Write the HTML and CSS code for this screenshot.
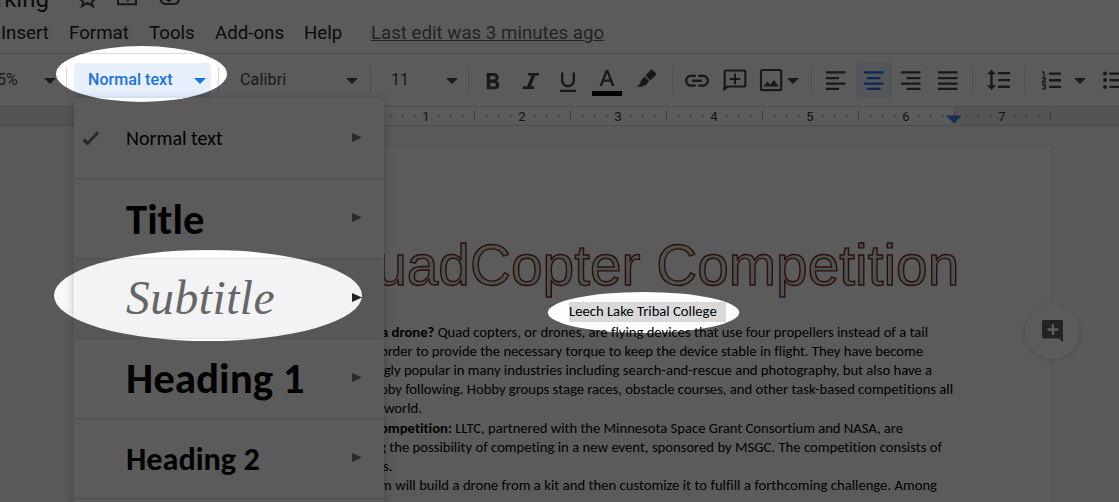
FILE: index.html
```
<!DOCTYPE html>
<html lang="en">
<head>
<meta charset="utf-8">
<title>Docs editor</title>
<link rel="stylesheet" href="styles.css">
</head>
<body>
<div class="app">
  <header class="titlebar">
    <span class="doc-name">rking</span>
    <svg class="title-icons" width="110" height="10" viewBox="0 0 110 10"><g fill="none" stroke="#444" stroke-width="2"><path d="M9.500-8L12-2l6 .5-4.500 3.500 1.500 4.300L9.500 3 4 6.300 5.500 2 1-1.500"/><path d="M40-6V4.300h18V-6M44-2h8M52-2l-3 3"/><path d="M82-5c0 5 1 9 6 9h8c5 0 5-4 5-9M88-1l3 2 5-4"/></g></svg>
  </header>
  <nav class="menubar">
    <span class="m-insert">Insert</span><span class="m-format">Format</span><span class="m-tools">Tools</span><span class="m-addons">Add-ons</span><span class="m-help">Help</span><span class="last-edit">Last edit was 3 minutes ago</span>
  </nav>
  <div class="toolbar">
    <div class="zoom-cell"><span>5%</span><i class="caret"></i></div>
    <i class="sep"></i>
    <div class="style-button"><span>Normal text</span><i class="caret blue"></i></div>
    <i class="sep"></i>
    <div class="font-cell"><span>Calibri</span><i class="caret"></i></div>
    <i class="sep"></i>
    <div class="size-cell"><span>11</span><i class="caret"></i></div>
    <i class="sep"></i>
    <svg class="ico g6" viewBox="0 0 36 36"><path transform="translate(3.500 6.300) scale(1.17)" d="M15.600 10.790c.97-.67 1.650-1.770 1.650-2.790 0-2.260-1.750-4-4-4H7v14h7.040c2.090 0 3.710-1.700 3.710-3.790 0-1.520-.86-2.820-2.150-3.420zM10 6.500h3c.83 0 1.500.67 1.500 1.500s-.67 1.500-1.500 1.500h-3v-3zm3.500 9H10v-3h3.500c.83 0 1.500.67 1.500 1.500s-.67 1.500-1.500 1.500z"/></svg>
    <svg class="ico g2" viewBox="0 0 36 36"><path d="M15 11h11v2.600h-3.700l-4.500 10.600H21V27H9.700v-2.800h4.400l4.500-10.600H15z"/></svg>
    <svg class="ico g1" viewBox="0 0 36 36"><path d="M12.200 10.500V18.500a5.800 5.800 0 0 0 11.600 0V10.500" fill="none" stroke="#444746" stroke-width="2.400"/><path d="M10 27.700h16v2.200H10z"/></svg>
    <svg class="ico g3" viewBox="0 0 36 36"><path fill-rule="evenodd" d="M16.700 8h2.600l6.200 16h-2.600l-1.600-4.200h-6.600L13.100 24h-2.600zM18 11l-2.500 6.600h5z"/><path fill="#000" d="M3 29h30v5H3z"/></svg>
    <svg class="ico g4" viewBox="0 0 36 36"><path d="M16.500 13.500l5-5.500a1.500 1.500 0 0 1 2.200 0l3 3a1.500 1.500 0 0 1 0 2.200l-5.500 5.300zM15.500 14.500l4.800 4.800-4 4.200-1.500-.2-1.500 1.500H8l3.700-3.800-.2-1.700z"/></svg>
    <i class="sep g7"></i>
    <svg class="ico g6" viewBox="0 0 36 36"><path transform="translate(3.600 4.400) scale(1.2)" d="M3.900 12c0-1.710 1.390-3.100 3.100-3.100h4V7H7c-2.760 0-5 2.240-5 5s2.240 5 5 5h4v-1.900H7c-1.710 0-3.100-1.390-3.100-3.100zM8 13h8v-2H8v2zm9-6h-4v1.900h4c1.710 0 3.100 1.390 3.100 3.100s-1.390 3.100-3.100 3.100h-4V17h4c2.760 0 5-2.240 5-5s-2.240-5-5-5z"/></svg>
    <svg class="ico g2" viewBox="0 0 36 36"><path d="M7.700 26.500V9.500q0-1 1-1h18.600q1 0 1 1v14q0 1-1 1H10.500z" fill="none" stroke="#444746" stroke-width="2.200"/><path d="M6.600 29.500v-5l5-.5zM17 11.500h2V16h4.300v2H19v4.300h-2V18h-4.300v-2H17z"/></svg>
    <svg class="ico" viewBox="0 0 36 36"><rect x="8" y="8" width="20.200" height="20.200" rx="1.500" fill="none" stroke="#444746" stroke-width="2.200"/><path d="M10.500 24.500l4-5 2.800 3.200 3.600-4.800 5 6.600z"/></svg>
    <i class="caret near"></i>
    <i class="sep g12"></i>
    <svg class="ico g6" viewBox="0 0 36 36"><path d="M8 9.200h19.500v2.300H8zM8 14.900h13v2.300H8zM8 20.500h19.500v2.300H8zM8 25.700h13V28H8z"/></svg>
    <svg class="ico g2 active" viewBox="0 0 36 36"><path d="M8 9.200h19.500v2.300H8zM11 14.900h13.500v2.300H11zM8 20.500h19.500v2.300H8zM11 25.700h13.500V28H11z"/></svg>
    <svg class="ico g1" viewBox="0 0 36 36"><path d="M8 9.200h19.500v2.300H8zM13.500 14.900h14v2.300h-14zM8 20.500h19.500v2.300H8zM13.500 25.700h14V28h-14z"/></svg>
    <svg class="ico g1" viewBox="0 0 36 36"><path d="M8 9.200h19.500v2.300H8zM8 14.900h19.500v2.300H8zM8 20.500h19.500v2.300H8zM8 25.700h19.500V28H8z"/></svg>
    <i class="sep g6"></i>
    <svg class="ico g7" viewBox="0 0 36 36"><path d="M11.500 7.500l4.500 4.700h-3.300v11.100H16L11.500 28 7 23.300h3.300V12.200H7zM18 10h12v2.300H18zM18 16.900h12v2.300H18zM18 23.600h12v2.300H18z"/></svg>
    <i class="sep g8"></i>
    <svg class="ico g7" viewBox="0 0 36 36"><path d="M17 10.500h12v2.300H17zM17 17.100h12v2.300H17zM17 23.800h12v2.300H17z"/><path d="M10 10h1.900v4.500M10 16h3.300v1L10.500 20h3.300M10 22.500h3.300v4.300H10M11.200 24.600h2" fill="none" stroke="#444746" stroke-width="1.300"/></svg>
    <i class="caret g6"></i>
    <svg class="ico g8" viewBox="0 0 36 36"><circle cx="11" cy="11.500" r="2"/><circle cx="11" cy="18" r="2"/><circle cx="11" cy="25" r="2"/><path d="M15.500 10.400H30v2.300H15.500zM15.500 17.100H30v2.300H15.500zM15.500 23.800H30v2.300H15.500z"/></svg>
  </div>
  <svg class="ruler" width="1119" height="19" viewBox="0 0 1119 19">
    <defs>
      <pattern id="minor" x="390" y="0" width="12" height="20" patternUnits="userSpaceOnUse"><path d="M0 7h1v4H0z" fill="#a4a7ab"/></pattern>
      <pattern id="major" x="378" y="0" width="96" height="20" patternUnits="userSpaceOnUse"><path d="M0 4h1v9H0z" fill="#a4a7ab"/></pattern>
    </defs>
    <path class="ruler-margin" d="M0 0h300v18H0zM954 0h165v18H954z"/>
    <path d="M384 0h667v19H384z" fill="url(#minor)"/>
    <path d="M384 0h667v19H384z" fill="url(#major)"/>
    <path d="M418 2h16v14h-16zM514 2h16v14h-16zM610 2h16v14h-16zM706 2h16v14h-16zM802 2h16v14h-16zM898 2h16v14h-16z" fill="#fff"/><path d="M994 2h16v14h-16z" fill="#e8eaed"/>
    <g class="ruler-num"><text x="426" y="14">1</text><text x="522" y="14">2</text><text x="618" y="14">3</text><text x="714" y="14">4</text><text x="810" y="14">5</text><text x="906" y="14">6</text><text x="1002" y="14">7</text></g>
    <path d="M946 8.500h16l-8 8z" fill="#4285f4"/>
    <path d="M0 18h1119v1H0z" fill="#d4d6d9"/>
  </svg>
  <main class="canvas">
    <article class="page">
      <svg class="wordart" width="700" height="80" viewBox="300 225 700 80"><text x="331" y="286">QuadCopter Competition</text></svg>
      <p class="subtitle"><span>Leech Lake Tribal College</span></p>
      <div class="body">
        <p class="l1"><b>a drone?</b> Quad copters, or drones, are flying devices that use four propellers instead of a tail</p>
        <p class="l2">order to provide the necessary torque to keep the device stable in flight. They have become</p>
        <p class="l3">ngly popular in many industries including search-and-rescue and photography, but also have a</p>
        <p class="l4">bby following. Hobby groups stage races, obstacle courses, and other task-based competitions all</p>
        <p class="l5">world.</p>
        <p class="l6"><b>ompetition:</b> LLTC, partnered with the Minnesota Space Grant Consortium and NASA, are</p>
        <p class="l7">g the possibility of competing in a new event, sponsored by MSGC. The competition consists of</p>
        <p class="l8">s.</p>
        <p class="l9">m will build a drone from a kit and then customize it to fulfill a forthcoming challenge. Among</p>
      </div>
    </article>
  </main>
</div>

<div class="add-comment"><svg width="22" height="23" viewBox="0 0 22 23"><path fill-rule="evenodd" d="M2 0h17.500q1.500 0 1.500 1.500V22l-4-3.500H2q-2 0-2-2V2q0-2 2-2zM9.700 4v4.300H5.500v2.400h4.200V15h2.400v-4.300h4.200V8.300h-4.200V4z"/></svg></div>

<div class="dropdown">
  <div class="item"><svg class="check" width="18" height="15" viewBox="0 0 18 15"><path d="M1.500 8.500l4 4L16 1.500" fill="none" stroke="#777" stroke-width="3.200"/></svg><span class="t-normal">Normal text</span><i class="arrow"></i></div>
  <div class="item"><span class="t-title">Title</span><i class="arrow"></i></div>
  <div class="item hover"><span class="t-sub">Subtitle</span><i class="arrow"></i></div>
  <div class="item"><span class="t-h1">Heading 1</span><i class="arrow"></i></div>
  <div class="item"><span class="t-h2">Heading 2</span><i class="arrow"></i></div>
</div>

<svg class="spotlight" width="1119" height="502" viewBox="0 0 1119 502">
  <defs><mask id="holes"><rect width="1119" height="502" fill="#fff"/><ellipse cx="141.500" cy="74" rx="85.500" ry="28"/><ellipse cx="208" cy="295.500" rx="154" ry="45.500"/><ellipse cx="643.500" cy="312.500" rx="95.700" ry="20.500"/></mask></defs>
  <rect width="1119" height="502" fill-opacity=".643" mask="url(#holes)"/>
</svg>
</body>
</html>
```

FILE: styles.css
```
* { box-sizing: border-box; }
body { margin: 0; width: 1119px; height: 502px; overflow: hidden; position: relative; background: #fff; font-family: Roboto, sans-serif; }
p { margin: 0; }
.app { width: 1119px; height: 502px; display: flex; flex-direction: column; overflow: hidden; }

.titlebar { height: 13px; flex: none; display: flex; align-items: flex-end; overflow: hidden; }
.doc-name { width: 82px; margin-left: -4px; font-size: 24px; line-height: 28px; color: #202124; height: 28px; }
.title-icons { align-self: flex-start; }

.menubar { height: 41px; flex: none; display: flex; align-items: center; border-bottom: 1px solid #dadce0; font-size: 18.7px; line-height: 40px; color: #202124; white-space: nowrap; }
.menubar span { flex: none; }
.m-insert { width: 69px; padding-left: 1px; }
.m-format { width: 80px; }
.m-tools { width: 66px; }
.m-addons { width: 89px; }
.m-help { width: 67px; }
.last-edit { color: #5f6368; text-decoration: underline; text-decoration-thickness: 1px; }

.toolbar { height: 53px; flex: none; display: flex; align-items: center; border-bottom: 1px solid #dadce0; font-size: 16px; color: #444746; overflow: hidden; }
.toolbar > * { flex: none; }
.toolbar span { position: relative; top: -1px; }
.sep { width: 1px; height: 26px; background: #dadce0; }
.caret { width: 12px; height: 6px; background: #444746; clip-path: polygon(0 0, 100% 0, 50% 100%); margin-top: 2px; }
.caret.blue { background: #1a73e8; }
.zoom-cell { width: 66px; display: flex; align-items: center; justify-content: space-between; padding-right: 10px; }
.zoom-cell span { margin-left: -3px; }
.style-button { width: 137px; height: 35px; margin: 0 7px; padding: 0 5px 0 14px; border-radius: 4px; background: #e8f0fe; color: #1a73e8; font-weight: 500; letter-spacing: .05px; display: flex; align-items: center; justify-content: space-between; }
.font-cell { width: 151px; padding: 0 12px 0 21px; display: flex; align-items: center; justify-content: space-between; }
.font-cell span { letter-spacing: .15px; }
.size-cell { width: 97px; padding: 0 10px 0 20px; display: flex; align-items: center; justify-content: space-between; }
.ico { width: 36px; height: 36px; fill: #444746; }
.ico.active { fill: #1a73e8; background: #e8f0fe; border-radius: 3px; }
.g1 { margin-left: 1px; }
.g2 { margin-left: 2px; }
.g3 { margin-left: 3px; }
.g4 { margin-left: 4px; }
.g6 { margin-left: 6px; }
.g7 { margin-left: 7px; }
.g8 { margin-left: 8px; }
.g12 { margin-left: 12px; }
.near { margin-left: -2px; }

.ruler { flex: none; display: block; background: #fff; }
.ruler-margin { fill: #e8eaed; }
.ruler-num { font: 13px Roboto, sans-serif; fill: #333639; text-anchor: middle; }

.canvas { flex: 1; min-height: 0; background: #f8faf9; padding-top: 18px; overflow: hidden; }
.page { width: 816px; height: 358px; overflow: hidden; margin-left: 236px; background: #fff; border: 1px solid #eceded; border-bottom: 0; padding-top: 79px; font-family: Calibri, Carlito, Lato, sans-serif; color: #000; }
.wordart { display: block; margin-left: 63px; font: 56.8px "Liberation Sans", Arial, sans-serif; fill: #dde3d4; stroke: #7d2a22; stroke-width: 1.4px; }
.subtitle { margin: -2px 0 0 332px; height: 20px; font-size: 14.67px; line-height: 19px; }
.subtitle span { display: block; width: 157px; height: 20px; background: #d9d9d9; }
.body { margin: .6px 0 0 142px; font-size: 14.67px; line-height: 19.2px; letter-spacing: -.015px; font-variant-ligatures: common-ligatures; }
.body p { white-space: nowrap; text-align-last: justify; height: 19.2px; }
.body .l1 { margin-left: 2px; width: 547px; }
.body .l2 { margin-left: 1px; width: 543px; height: 19.2px; }
.body .l3 { margin-left: -3px; width: 556px; }
.body .l4 { margin-left: 1px; width: 572px; }
.body .l5 { margin-left: 5px; width: 38px; }
.body .l6 { margin-left: 1px; width: 521px; }
.body .l7 { margin-left: 0; width: 563px; }
.body .l8 { margin-left: 4px; width: 9px; }
.body .l9 { margin-left: 1px; width: 557px; }

.add-comment { position: absolute; left: 1025px; top: 304px; width: 55px; height: 55px; border-radius: 50%; background: #fff; box-shadow: 0 1px 4px rgba(60,64,67,.2); display: flex; align-items: center; justify-content: center; fill: #5f6368; }

.dropdown { position: absolute; left: 74px; top: 98px; width: 310px; height: 404px; overflow: hidden; background: #fff; border-radius: 4px 4px 0 0; box-shadow: 0 2px 8px 2px rgba(60,64,67,.22); padding: 1px 1px 0; font-family: Calibri, Carlito, Lato, sans-serif; color: #000; }
.item { position: relative; height: 80px; border-bottom: 1px solid #dfe1e3; padding: 0 21px 2px 51px; display: flex; align-items: center; justify-content: space-between; white-space: nowrap; }
.item.hover { background: #f1f3f4; }
.arrow { width: 10px; height: 9px; background: #777; clip-path: polygon(0 0, 100% 50%, 0 100%); }
.hover .arrow { background: #222; }
.check { position: absolute; left: 7px; top: 32px; }
.t-normal { font-size: 20px; }
.t-title { font-size: 42.7px; font-weight: 700; padding-top: 2px; }
.t-sub { font: italic 47.5px Georgia, "Liberation Serif", serif; letter-spacing: .5px; color: #666; }
.t-h1 { font-size: 43px; font-weight: 700; padding-top: 2px; }
.t-h2 { font-size: 32.2px; font-weight: 700; padding-top: 2px; }

.spotlight { position: absolute; left: 0; top: 0; pointer-events: none; }
```
